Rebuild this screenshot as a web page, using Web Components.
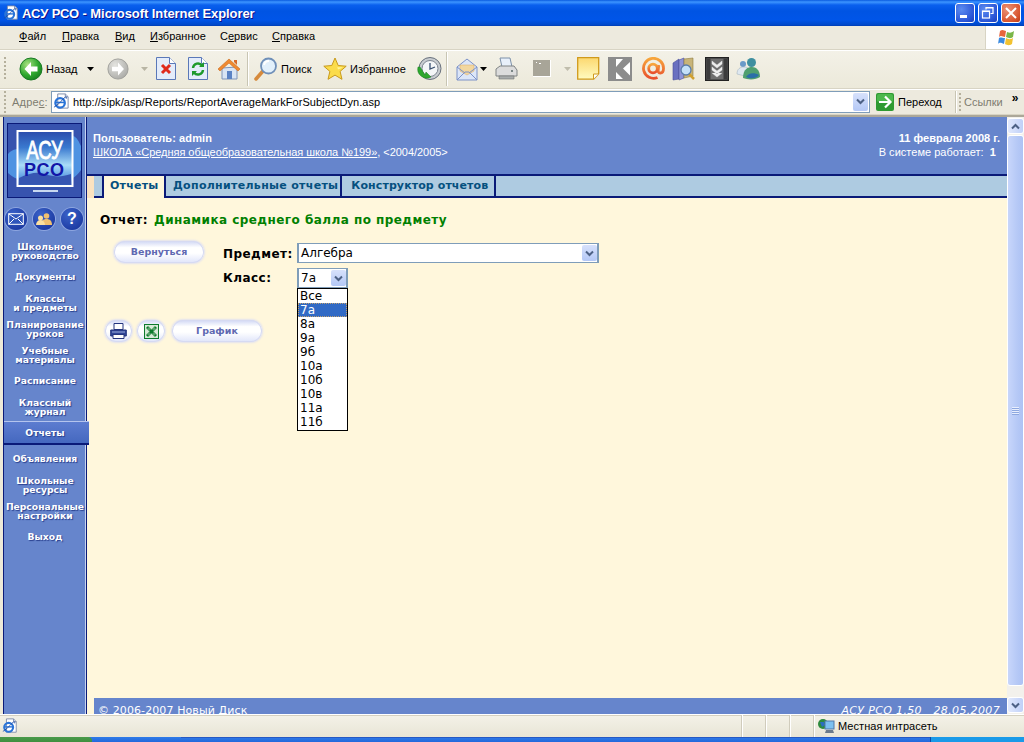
<!DOCTYPE html>
<html lang="ru"><head><meta charset="utf-8"><title>АСУ РСО</title>
<style>
html,body{margin:0;height:742px;overflow:hidden;background:#ece9d8}
body{display:flex;flex-direction:column;font-family:"Liberation Sans",sans-serif;font-size:11px}
</style></head><body>
<xp-titlebar></xp-titlebar>
<xp-menubar></xp-menubar>
<xp-toolbar></xp-toolbar>
<xp-addressbar></xp-addressbar>
<xp-viewport>
  <asu-sidebar slot="side">
    <asu-nav>Школьное<br>руководство</asu-nav>
    <asu-nav>Документы</asu-nav>
    <asu-nav>Классы<br>и предметы</asu-nav>
    <asu-nav>Планирование<br>уроков</asu-nav>
    <asu-nav>Учебные<br>материалы</asu-nav>
    <asu-nav>Расписание</asu-nav>
    <asu-nav>Классный<br>журнал</asu-nav>
    <asu-nav active>Отчеты</asu-nav>
    <asu-nav>Объявления</asu-nav>
    <asu-nav>Школьные<br>ресурсы</asu-nav>
    <asu-nav>Персональные<br>настройки</asu-nav>
    <asu-nav>Выход</asu-nav>
  </asu-sidebar>
  <asu-header slot="page"></asu-header>
  <asu-tabs slot="page">
    <asu-tab active>Отчеты</asu-tab>
    <asu-tab style="padding-right:2px">Дополнительные отчеты</asu-tab>
    <asu-tab style="padding-left:9px;letter-spacing:.1px">Конструктор отчетов</asu-tab>
  </asu-tabs>
  <asu-report slot="page"></asu-report>
  <asu-footer slot="page"></asu-footer>
  <xp-scrollbar slot="scroll"></xp-scrollbar>
</xp-viewport>
<xp-statusbar></xp-statusbar>
<xp-taskbar></xp-taskbar>
<script>
class Base extends HTMLElement{
  constructor(){super();this.attachShadow({mode:'open'}).innerHTML=this.constructor.html;}
}
const IE=(s)=>`<svg width="${s}" height="${s}" viewBox="0 0 18 18" style="flex:none"><path d="M5 1h8l3 3v12H5z" fill="#fff" stroke="#7c8aa8"/><path d="M13 1v3h3" fill="#c8d4ea" stroke="#7c8aa8"/><circle cx="7.5" cy="10.5" r="5" fill="none" stroke="#2a74d8" stroke-width="2.4"/><path d="M3 10h9.5" stroke="#2a74d8" stroke-width="1.6"/><path d="M1 15c2-1 8-6 11-10 1.500-1 3-1 2 1" fill="none" stroke="#1c4ea8" stroke-width="1"/></svg>`;
const chev=(c='#4d6185')=>`<svg width="9" height="7" viewBox="0 0 9 7"><path d="M1 1.500l3.500 3.500L8 1.500" fill="none" stroke="${c}" stroke-width="2"/></svg>`;

customElements.define('xp-titlebar',class extends Base{static html=`<style>
:host{display:flex;align-items:center;height:26px;flex:none;box-sizing:border-box;padding:0 3px 0 3px;background:linear-gradient(#0a5be0 0,#3d95ff 2px,#0a60ee 5px,#0054e3 11px,#0055e8 20px,#0048c8 25px,#003bb0 26px);color:#fff}
.t{font:bold 13px "Liberation Sans",sans-serif;margin-left:3px;letter-spacing:-.07px;text-shadow:1px 1px #0f1089;flex:1}
.b{width:20px;height:20px;box-sizing:border-box;border:1px solid #fff;border-radius:3px;margin-left:3px;display:flex;align-items:center;justify-content:center;background:radial-gradient(circle at 30% 30%,#5b8bf0,#2a55d6 70%,#1c3fb8)}
.c{background:radial-gradient(circle at 30% 30%,#ea9277,#d8552f 70%,#b93b18)}
</style>${IE(16)}<span class="t">АСУ РСО - Microsoft Internet Explorer</span>
<span class="b"><svg width="14" height="14"><rect x="2" y="9" width="7" height="3" fill="#fff"/></svg></span>
<span class="b"><svg width="14" height="14" fill="none" stroke="#fff"><path d="M5 3.500V1.500h7v6h-2.500" stroke-width="1.200"/><rect x="1.500" y="5" width="7" height="7" stroke-width="1.200"/><path d="M5 2h7M2 5.500h6" stroke-width="1"/></svg></span>
<span class="b c" style="margin-right:0"><svg width="14" height="14" fill="none" stroke="#fff" stroke-width="2"><path d="M2 2l10 10M12 2L2 12"/></svg></span>`});

customElements.define('xp-menubar',class extends Base{static html=`<style>
:host{display:flex;height:24px;flex:none;box-sizing:border-box;background:#edeade;border-bottom:1px solid #d8d4c4;font:11px "Liberation Sans",sans-serif;color:#000;align-items:flex-start;padding-left:19px}
span{display:block;margin-top:4px}u{text-decoration:underline}
.f{margin-left:auto;width:39px;height:23px;background:#fff;border-left:1px solid #d8d4c4;display:flex;align-items:center;justify-content:center;box-sizing:border-box;padding-left:3px}
</style><span style="width:43px"><u>Ф</u>айл</span><span style="width:53px"><u>П</u>равка</span><span style="width:35px"><u>В</u>ид</span><span style="width:70px"><u>И</u>збранное</span><span style="width:52px">С<u>е</u>рвис</span><span style="width:50px"><u>С</u>правка</span>
<div class="f"><svg width="20" height="18" viewBox="0 0 20 18"><path d="M3 2c3-2 4 0 6 0L8 8C6 8 4 6 2 8z" fill="#e8643c"/><path d="M10 3c3 1 4 1 7-1l-1 6c-3 2-4 1-7 0z" fill="#7ab648"/><path d="M2 9c2-1 3 0 6 0l-1 6c-3-1-4-2-6 0z" fill="#3a8ae0"/><path d="M9 9c2 1 4 2 7 0l-1 6c-3 2-5 1-7 0z" fill="#f2c230"/></svg></div>`});

const grip=`<svg width="3" height="24" style="flex:none"><g fill="#b5b09c"><rect y="0" width="2" height="2"/><rect y="4" width="2" height="2"/><rect y="8" width="2" height="2"/><rect y="12" width="2" height="2"/><rect y="16" width="2" height="2"/><rect y="20" width="2" height="2"/></g></svg>`;
const caret=(c='#000')=>`<svg width="7" height="4"><path d="M0 0h7L3.500 4z" fill="${c}"/></svg>`;

customElements.define('xp-toolbar',class extends Base{static html=`<style>
:host{display:flex;height:39px;flex:none;box-sizing:border-box;align-items:center;background:linear-gradient(#f3f1e7,#ece9da);border-top:1px solid #fff;border-bottom:1px solid #d8d4c4;font:11px "Liberation Sans",sans-serif;color:#000;padding:0 0 2px 4px}
i{display:block;flex:none;font-style:normal;position:relative}svg{display:block}
span{flex:none}
.sep{width:1px;height:34px;background:#c8c5b3;border-right:1px solid #fff;flex:none}
</style>${grip}
<i style="margin-left:12px"><svg width="24" height="24" viewBox="0 0 24 24"><defs><radialGradient id="g" cx=".35" cy=".3" r=".8"><stop offset="0" stop-color="#a8e080"/><stop offset=".6" stop-color="#2ea82e"/><stop offset="1" stop-color="#157a1e"/></radialGradient><radialGradient id="gy" cx=".35" cy=".3" r=".8"><stop offset="0" stop-color="#e4e4e0"/><stop offset="1" stop-color="#a8a8a4"/></radialGradient></defs><circle cx="12" cy="12" r="11" fill="url(#g)" stroke="#1a7a24"/><path d="M12 5l-6.500 7 6.500 7v-4.500h6.500v-5H12z" fill="#fff"/></svg></i>
<span style="margin-left:3px;width:36px">Назад</span><i style="margin-left:5px">${caret()}</i>
<i style="margin-left:13px"><svg width="22" height="22" viewBox="0 0 24 24"><circle cx="12" cy="12" r="11" fill="url(#gy)" stroke="#9c9c98"/><path d="M12 5l6.500 7-6.500 7v-4.500H5.500v-5H12z" fill="#fff"/></svg></i>
<i style="margin-left:12px">${caret('#b8b5a4')}</i>
<i style="margin-left:8px"><svg width="20" height="23" viewBox="0 0 20 23"><path d="M.500.500h13l6 6v16H.500z" fill="#e4ecfa" stroke="#5a78b8"/><path d="M13.500.500v6h6" fill="#fff" stroke="#5a78b8"/><path d="M6 8l8 8M14 8l-8 8" stroke="#e02a1c" stroke-width="3"/></svg></i>
<i style="margin-left:12px"><svg width="20" height="23" viewBox="0 0 20 23"><path d="M.500.500h13l6 6v16H.500z" fill="#e4ecfa" stroke="#5a78b8"/><path d="M13.500.500v6h6" fill="#fff" stroke="#5a78b8"/><path d="M5 11a5 5 0 0 1 9-2.500M15 13a5 5 0 0 1-9 2.500" fill="none" stroke="#1e9a2c" stroke-width="2.400"/><path d="M16 5v5h-5zM4 19v-5h5z" fill="#1e9a2c"/></svg></i>
<i style="margin-left:9px"><svg width="24" height="24" viewBox="0 0 24 24"><path d="M5 11v11h15V10z" fill="#d8e4f4" stroke="#7e94b8"/><path d="M1 12L12 2l11 10-2 2-9-8-9 8z" fill="#f08a30" stroke="#c86a1c" stroke-width=".6"/><path d="M17 3h3v5l-3-3z" fill="#d86a28"/><rect x="10" y="14" width="5" height="8" fill="#5a82c4"/></svg></i>
<div class="sep" style="margin-left:6px"></div>
<i style="margin-left:5px"><svg width="24" height="24" viewBox="0 0 24 24"><path d="M2 22l7-8" stroke="#d68a3c" stroke-width="3.500" stroke-linecap="round"/><circle cx="14.500" cy="9" r="7.500" fill="#e2f0fb" stroke="#6f8fb8" stroke-width="1.800"/><path d="M10 8a5 5 0 0 1 5-4" stroke="#fff" stroke-width="2" fill="none"/></svg></i>
<span style="margin-left:3px;width:38px">Поиск</span>
<i style="margin-left:4px"><svg width="24" height="24" viewBox="0 0 24 24"><path d="M12 1l3.200 7.500 8 .7-6.100 5.200 1.900 7.900L12 18.100l-7 4.200 1.900-7.900L.8 9.200l8-.7z" fill="#fbdc4a" stroke="#c89a1c"/><path d="M12 4l2 6 6 .5-5 2" fill="#fff49a"/></svg></i>
<span style="margin-left:3px;width:61px">Избранное</span>
<i style="margin-left:6px"><svg width="25" height="25" viewBox="0 0 25 25"><circle cx="13" cy="12.500" r="11" fill="#c8ccd0" stroke="#68707c"/><circle cx="13" cy="12.500" r="8" fill="#f4f6f8" stroke="#7c8490"/><path d="M13 7v6l5-2" fill="none" stroke="#3a5070" stroke-width="1.300"/><path d="M1 11a9 9 0 0 0 13 10L9 16l-1 3-5-8z" fill="#2ea82e" stroke="#1a7a24" stroke-width=".5"/></svg></i>
<div class="sep" style="margin-left:4px"></div>
<i style="margin-left:8px"><svg width="22" height="24" viewBox="0 0 22 24"><path d="M1 10L11 2l10 8v13H1z" fill="#dce6f8" stroke="#7c92c8"/><path d="M4 8h14v6l-7 4-7-4z" fill="#f2d7a0" stroke="#d8a866" stroke-width=".5"/><path d="M1 23l8-8h4l8 8M1 10l8 6M21 10l-8 6" fill="none" stroke="#7c92c8"/></svg></i>
<i style="margin-left:2px">${caret()}</i>
<i style="margin-left:7px"><svg width="24" height="24" viewBox="0 0 24 24"><path d="M6 1h10l2 9H8z" fill="#e8f0fa" stroke="#7c90a8"/><path d="M2 12l4-3h14l3 4v6H2z" fill="#dcdcdc" stroke="#808484"/><path d="M5 19h15v3H5z" fill="#a8acac" stroke="#707474" stroke-width=".6"/><circle cx="18" cy="14" r="1" fill="#5a6a6a"/></svg></i>
<i style="margin-left:15px"><svg width="18" height="17"><rect width="18" height="17" fill="#a8a598"/><rect y="16" width="18" height="1" fill="#fff"/><rect x="17" width="1" height="17" fill="#fff"/><rect x="6" y="3" width="2" height="1" fill="#fff"/><rect x="3" y="2" width="1" height="1" fill="#fff"/></svg></i>
<i style="margin-left:13px">${caret('#c0bdac')}</i>
<i style="margin-left:6px"><svg width="23" height="23" viewBox="0 0 23 23"><defs><linearGradient id="y" x1="0" y1="0" x2="0" y2="1"><stop offset="0" stop-color="#fcd870"/><stop offset="1" stop-color="#fffbc0"/></linearGradient></defs><path d="M.700.700h21v16l-5 5.500H.700z" fill="url(#y)" stroke="#d09a1c" stroke-width="1.300"/><path d="M16.500 22v-5h5" fill="#fff" stroke="#d09a1c"/></svg></i>
<i style="margin-left:8px"><svg width="24" height="24" viewBox="0 0 24 24"><rect x="1" y="1" width="22" height="22" fill="#fff" stroke="#8c8c8c" stroke-width="2"/><path d="M2 2h6v8l7-8h7v3l-7 6.500 7 7V22h-7l-7-7v7H2z" fill="#8c8c8c"/></svg></i>
<i style="margin-left:9px"><svg width="24" height="24" viewBox="0 0 24 24" fill="none"><defs><linearGradient id="o" x1="0" y1="0" x2="0" y2="1"><stop offset="0" stop-color="#f7a63c"/><stop offset="1" stop-color="#e8502c"/></linearGradient></defs><path d="M16.500 20.500a10 10 0 1 1 6-9c0 3-1.500 4.500-3.300 4.500s-2.200-1.500-2-3l.5-5" stroke="url(#o)" stroke-width="2.800"/><circle cx="12" cy="11.500" r="4.300" stroke="url(#o)" stroke-width="2.800"/></svg></i>
<i style="margin-left:7px"><svg width="24" height="24" viewBox="0 0 24 24"><path d="M1 6l6-4v20l-6 1z" fill="#6a70c0" stroke="#4a4f98" stroke-width=".6"/><path d="M7 3l5-2v20l-5 2z" fill="#8f94d8" stroke="#4a4f98" stroke-width=".6"/><path d="M12 2l9-1v18l-9 2z" fill="#c8b478" stroke="#8f7c40" stroke-width=".6"/><path d="M17 17l5 5" stroke="#d0a030" stroke-width="2.500"/><circle cx="14" cy="13" r="5" fill="#c4e0f8" stroke="#5a7ca8" stroke-width="1.300"/></svg></i>
<i style="margin-left:9px"><svg width="24" height="24" viewBox="0 0 24 24"><rect x=".700" y=".700" width="22.600" height="22.600" fill="#6e6e6e" stroke="#222" stroke-width="1.400"/><rect x="1.500" y="1.500" width="4" height="21" fill="#3c3c3c"/><rect x="18.500" y="1.500" width="4" height="21" fill="#3c3c3c"/><path d="M7 4l5 4 5-4v3l-5 4-5-4zM7 10l5 4 5-4v3l-5 4-5-4zM7 16l5 4 5-4" fill="#eee" stroke="#eee" stroke-width=".4"/></svg></i>
<i style="margin-left:7px"><svg width="25" height="24" viewBox="0 0 25 24"><circle cx="7" cy="7" r="3" fill="#6a9ac8"/><path d="M1 17c0-5 3-7 7-7s5 2 5 4l-4 5z" fill="#dfe8f0" stroke="#9ab" stroke-width=".5"/><circle cx="15.500" cy="5.500" r="4.500" fill="#3f8f9f"/><path d="M7 21c0-9 5-11 9-11s8 3 8 10c-4 3-12 3-17 1z" fill="#4f9f70"/><path d="M10 20c2-4 8-5 13-2-3 4-9 4-13 2z" fill="#2a6fa8"/></svg></i>`});

customElements.define('xp-addressbar',class extends Base{static html=`<style>
:host{display:flex;height:26px;flex:none;box-sizing:border-box;align-items:center;background:#edeade;border-top:1px solid #fff;border-bottom:1px solid #d8d4c4;font:11px "Liberation Sans",sans-serif;padding:0 0 1px 4px;color:#000}
.l{color:#7e7c70;margin-left:5px;width:39px;letter-spacing:.2px}
.in{width:819px;height:22px;box-sizing:border-box;background:#fff;border:1px solid #7f9db9;display:flex;align-items:center;padding-left:1px;letter-spacing:.05px}
.in span{margin-left:3px;flex:1}
.cb{width:15px;height:18px;border-radius:2px;background:linear-gradient(#d7e1fb,#b4c8f6);display:flex;align-items:center;justify-content:center;margin-right:1px}
.go{margin-left:6px;width:18px;height:18px;display:block}
svg{flex:none}
.p{margin-left:4px;width:57px}
.s{width:1px;height:22px;background:#c8c5b3;border-right:1px solid #fff}
.d{color:#7e7c70;margin-left:2px}
.m{margin-left:9px;font:bold 12px "Liberation Sans",sans-serif;margin-top:-8px}
</style>${grip.replace('height="24"','height="22"')}<span class="l">Адре<u>с</u>:</span>
<div class="in">${IE(17)}<span>http://sipk/asp/Reports/ReportAverageMarkForSubjectDyn.asp</span><div class="cb">${chev()}</div></div>
<svg class="go" viewBox="0 0 18 18"><rect width="18" height="18" rx="2" fill="#2f9a32"/><rect x="1" y="1" width="16" height="8" rx="2" fill="#4cb84c"/><path d="M9 3.500l5.500 5.500L9 14.500M3 9h10" fill="none" stroke="#fff" stroke-width="2.200"/></svg>
<span class="p">Переход</span><div class="s"></div>${grip.replace('height="24"','height="18"').replace('style="flex:none"','style="flex:none;margin-left:2px"')}<span class="d">Ссылки</span><span class="m">»</span>`});

customElements.define('xp-viewport',class extends Base{static html=`<style>
:host{flex:1;min-height:0;display:grid;grid-template-columns:87px 1fr 17px;border-top:2px solid #aca899;position:relative;overflow:hidden;box-sizing:border-box}
.p{display:flex;flex-direction:column;min-width:0;min-height:0;background:#fff7dc}
</style><slot name="side"></slot><div class="p"><slot name="page"></slot></div><slot name="scroll"></slot>`});

customElements.define('asu-sidebar',class extends Base{static html=`<style>
:host{display:block;box-sizing:border-box;background:#6685cc;border-left:1px solid #0a1a78;border-right:1px solid #0a1a78;margin-left:3px;width:84px;box-shadow:inset -1px 0 #c8d4f0;position:relative;z-index:2}
.logo{margin:6px 0 0 3px;width:75px;height:75px;box-sizing:border-box;border:1px solid #0a1a78;background:#3753ae;position:relative;overflow:hidden}
.logo svg{position:absolute;inset:0}
.logo b{position:absolute;left:0;width:73px;text-align:center;font-family:"Liberation Sans",sans-serif;font-weight:bold}
.ic{display:flex;gap:6px;margin:10px 0 0 1px;height:22px}
.ic i{display:flex;align-items:center;justify-content:center;width:22px;height:22px;border-radius:50%;background:radial-gradient(circle at 35% 30%,#3a62c8,#142f98);box-shadow:0 0 0 1px #8ea6e0}
.n{margin-top:7.500px}
</style><div class="logo"><svg viewBox="0 0 73 73"><defs><linearGradient id="lg" x1="0" y1="0" x2="0" y2="1"><stop offset="0" stop-color="#2b4cab"/><stop offset=".3" stop-color="#3a79cf"/><stop offset=".62" stop-color="#a9dcf8"/><stop offset=".85" stop-color="#5c9ae2"/><stop offset="1" stop-color="#2f55b6"/></linearGradient></defs><path d="M0 30c5-6 11-4 16-9v34c-6 2-11-2-16-6zM65 12c4 1 6 6 8 10v24c-3 4-5 6-8 8z" fill="#4f93e2"/><rect x="9.500" y="7" width="55" height="55" fill="url(#lg)" stroke="#fff" stroke-width="2"/><path d="M11 54c8-4 16-6 22-5 8 2 16 6 30 1v10.500H11z" fill="#3756b2"/><rect x="25" y="66" width="25" height="2" fill="#c8d8f0"/></svg><b style="top:15px;color:#fff;font-size:25px;line-height:22px;transform:scaleX(.74);font-weight:normal;-webkit-text-stroke:.8px #fff">АСУ</b><b style="top:37px;color:#1216a8;font-size:18px;line-height:18px;letter-spacing:1px">РСО</b></div>
<div class="ic"><i><svg width="16" height="12"><rect x=".7" y=".7" width="14.600" height="10.600" fill="#2f55bb" stroke="#fff"/><path d="M1 1l7 5 7-5M1 11l5-5M15 11l-5-5" fill="none" stroke="#fff"/></svg></i><i><svg width="18" height="13"><circle cx="11.500" cy="3" r="2.800" fill="#f0c070"/><path d="M6 12c0-4 2-6 5.500-6S17 8 17 12z" fill="#f0c070"/><circle cx="5.500" cy="5" r="2.500" fill="#fbe0a0"/><path d="M1 12c0-3 2-5 4.500-5S10 9 10 12z" fill="#fbe0a0"/></svg></i><i style="font:bold 16px 'Liberation Sans',sans-serif;color:#fff">?</i></div>
<div class="n"><slot></slot></div>`});

customElements.define('asu-nav',class extends Base{static html=`<style>
:host{display:flex;height:26px;align-items:center;justify-content:flex-start;text-align:center;font:bold 9.200px/9px "DejaVu Sans",sans-serif;color:#fff;text-shadow:1px 1px 1px #29408f;white-space:nowrap;position:relative}
:host([active]) .w{background:linear-gradient(#5c7cd0,#4568bf);border-top:1px solid #b4c4ee;border-bottom:2px solid #0a1a78;height:24px;width:calc(100% + 3px);padding:1px 3px 0 0}
.w{width:100%;display:flex;align-items:center;justify-content:center;box-sizing:border-box;flex:none}
</style><div class="w"><div><slot></slot></div></div>`});

customElements.define('asu-header',class extends Base{static html=`<style>
:host{display:flex;height:59px;flex:none;box-sizing:border-box;background:#6685cc;color:#fff;font:11px/14px "Liberation Sans",sans-serif;padding:14px 7px 0 6px;justify-content:space-between;border-bottom:2px solid #0a1a78;letter-spacing:-.04px}
.u{font-weight:bold;letter-spacing:.1px}
u{color:#fff}
.r{text-align:right;letter-spacing:.02px}
.r b{letter-spacing:.05px}
</style><div><div class="u">Пользователь: admin</div><div><u>ШКОЛА «Средняя общеобразовательная школа №199»</u>, &lt;2004/2005&gt;</div></div>
<div class="r"><div><b>11 февраля 2008 г.</b></div><div style="padding-right:4px">В системе работает:&nbsp; <b>1</b></div></div>`});

customElements.define('asu-tabs',class extends Base{static html=`<style>
:host{display:flex;height:22px;flex:none;box-sizing:border-box;background:#aecbe1;border-bottom:2px solid #0a1a78}
.a{width:7px;background:#fbe3c0;margin-bottom:-2px}.b{width:8px}
</style><div class="a"></div><div class="b"></div><slot></slot>`});
customElements.define('asu-tab',class extends Base{static html=`<style>
:host{display:block;height:20px;box-sizing:border-box;font:bold 11px/20px "DejaVu Sans",sans-serif;color:#05507f;padding:0 6px 0 7px;border-right:2px solid #0a1a78;letter-spacing:.31px;white-space:nowrap}
:host([active]){background:#fff7dc;height:22px;border-left:2px solid #0a1a78;margin-bottom:-2px;padding:0 5px 0 6px;z-index:1;position:relative;width:64px;box-sizing:border-box;letter-spacing:.25px}
</style><slot></slot>`});

customElements.define('asu-button',class extends Base{static html=`<style>
:host{display:flex;align-items:center;justify-content:center;box-sizing:border-box;height:22px;padding-bottom:2px;border-radius:11px;background:linear-gradient(#cfd6f4 0,#fff 30%,#fff 55%,#dfe4fa 100%);box-shadow:inset 0 0 0 1px #d6daf2,0 0 2px 1px #e2e2ef;color:#5f69b2;font:bold 9.500px "DejaVu Sans",sans-serif;letter-spacing:0;flex:none}
</style><slot></slot>`});

customElements.define('xp-select',class extends Base{static html=`<style>
:host{display:flex;align-items:center;box-sizing:border-box;height:20px;background:#fff;border:1px solid #7f9db9;border-width:1px 2px;font:12px "DejaVu Sans",sans-serif;color:#000;padding-left:2px;letter-spacing:0}
.t{flex:1}
.b{width:15px;height:16px;border-radius:2px;background:linear-gradient(#d7e1fb,#b4c8f6);display:flex;align-items:center;justify-content:center}
</style><span class="t"><slot></slot></span><span class="b">${chev()}</span>`});

customElements.define('xp-listbox',class extends Base{static html=`<style>
:host{display:block;box-sizing:border-box;width:51px;background:#fff;border:1px solid #000;font:12px/14px "DejaVu Sans",sans-serif;color:#000;padding-bottom:1px;letter-spacing:0}
</style><slot></slot>`});
customElements.define('xp-option',class extends Base{static html=`<style>
:host{display:block;height:14px;padding-left:2px;white-space:nowrap;box-sizing:border-box}
:host([selected]){background:#316ac5;color:#fff;outline:1px dotted #c0a070;outline-offset:-1px}
</style><slot></slot>`});

customElements.define('asu-report',class extends Base{static html=`<style>
:host{display:block;flex:1;min-height:0;position:relative;font:bold 12px "DejaVu Sans",sans-serif;color:#000;padding:15px 0 0 13px;letter-spacing:.45px}
.h{height:15px;line-height:15px;white-space:nowrap}
.h span{color:#008000;margin-left:6px}
.row{display:flex;margin-top:13px}
.f{display:grid;grid-template-columns:74px auto;grid-template-rows:20px 20px;row-gap:5px;margin:2px 0 0 19px;align-items:center}
.f>span:first-child{padding-top:1px}
.cls{position:relative;width:51px}
.ov{position:absolute;left:0;top:100%;z-index:5;font-weight:normal}
.act{display:flex;gap:5px;margin:32px 0 0 5px}
.act asu-button:last-child{margin-left:2px}
svg{display:block}
</style><div class="h">Отчет:<span>Динамика среднего балла по предмету</span></div>
<div class="row"><asu-button style="margin-left:14px;width:90px">Вернуться</asu-button>
<div class="f"><span>Предмет:</span><xp-select style="width:302px">Алгебра</xp-select><span>Класс:</span>
<div class="cls"><xp-select>7а</xp-select><div class="ov"><xp-listbox><xp-option>Все</xp-option><xp-option selected>7а</xp-option><xp-option>8а</xp-option><xp-option>9а</xp-option><xp-option>9б</xp-option><xp-option>10а</xp-option><xp-option>10б</xp-option><xp-option>10в</xp-option><xp-option>11а</xp-option><xp-option>11б</xp-option></xp-listbox></div></div></div></div>
<div class="act"><asu-button style="width:27px;padding:0"><svg width="17" height="16" viewBox="0 0 17 16"><path d="M4 .500h9v6H4z" fill="#fff" stroke="#24357e"/><path d="M.700 7h15.600v6H.700z" fill="#2f4596" stroke="#24357e"/><path d="M3 11.500h11v4H3z" fill="#fff" stroke="#24357e"/><path d="M2 9h13" stroke="#9fb0e0"/></svg></asu-button><asu-button style="width:28px;padding:0"><svg width="15" height="15" viewBox="0 0 15 15"><rect x=".5" y=".5" width="14" height="14" fill="#d8ead8" stroke="#0c7a2c"/><path d="M3 3l9 9M12 3l-9 9" stroke="#0c7a2c" stroke-width="3"/><path d="M1 5h13M1 10h13M5 1v13M10 1v13" stroke="#bcd8bc" stroke-width=".5"/></svg></asu-button><asu-button style="width:90px">График</asu-button></div>`});

customElements.define('asu-footer',class extends Base{static html=`<style>
:host{display:flex;height:16px;flex:none;box-sizing:border-box;margin-left:7px;background:#6685cc;color:#fff;font:11px/14px "DejaVu Sans",sans-serif;padding:6px 7px 0 4px;justify-content:space-between;overflow:hidden;white-space:nowrap;letter-spacing:.1px}
i{letter-spacing:.35px}
</style><span>© 2006-2007 Новый Диск</span><i>АСУ РСО 1.50 &nbsp; 28.05.2007</i>`});

customElements.define('xp-scrollbar',class extends Base{static html=`<style>
:host{display:flex;flex-direction:column;background:#f3f1ec;box-sizing:border-box;padding:1px 0 0}
.b{height:16px;flex:none;box-sizing:border-box;border:1px solid #fff;border-radius:3px;background:linear-gradient(90deg,#e1e9fd,#c0d0f8);display:flex;align-items:center;justify-content:center}
.t{flex:1;border:1px solid #fff;border-radius:3px;background:linear-gradient(90deg,#c8d6fb,#b6c9f6 60%,#adc2f4);display:flex;align-items:center;justify-content:center;margin:1px 0 11px}
.g{width:7px;height:8px;background:repeating-linear-gradient(#e8eefd 0 1px,#8ea8e0 1px 2px)}
svg{display:block}
</style><div class="b"><svg width="9" height="7" style="transform:rotate(180deg)" viewBox="0 0 9 7"><path d="M1 1.500l3.500 3.500L8 1.500" fill="none" stroke="#4d6185" stroke-width="2"/></svg></div><div class="t"><div class="g"></div></div><div class="b" style="margin-bottom:1px">${chev()}</div>`});

customElements.define('xp-statusbar',class extends Base{static html=`<style>
:host{display:flex;height:23px;flex:none;box-sizing:border-box;align-items:center;background:linear-gradient(#f4f2e8,#e8e5d6);border-top:1px solid #fff;box-shadow:inset 0 1px #d4d0c0;font:11px "Liberation Sans",sans-serif;color:#000;padding-left:2px}
.s{margin-left:auto;display:flex;align-items:center;height:100%}
.c{width:24px;height:100%;box-sizing:border-box;border-left:1px solid #d0ccbc;box-shadow:inset 1px 0 #fff}
.z{box-sizing:border-box;height:100%;border-left:1px solid #d0ccbc;box-shadow:inset 1px 0 #fff;width:211px;display:flex;align-items:center;padding-left:4px}
.z span{margin-left:3px;letter-spacing:.05px}
</style>${IE(16)}<div class="s"><div class="c"></div><div class="c"></div><div class="c"></div><div class="z"><svg width="17" height="17" viewBox="0 0 17 17"><circle cx="5" cy="6" r="5" fill="#2d8a3e"/><path d="M2 4h4l1 3-3 2z" fill="#2a6fc0"/><rect x="7" y="3" width="9" height="8" fill="#7cc0f0" stroke="#5078a8"/><path d="M8 12h7l1 3H7z" fill="#6a7a8c"/></svg><span>Местная интрасеть</span></div></div>`});

customElements.define('xp-taskbar',class extends Base{static html=`<style>
:host{display:flex;height:5px;flex:none;background:linear-gradient(#2f7be8,#2368dc)}
.st{width:92px;background:linear-gradient(#4a9a4a,#3f8f3f);border-top-right-radius:4px}
.a{margin-left:89px;width:750px;border-top:1px solid #2659c4}
.b{margin-left:auto;width:93px;background:#1a9ae8;border-left:1px solid #0a4aa8}
</style><div class="st"></div><div class="a"></div><div class="b"></div>`});
</script>
</body></html>
